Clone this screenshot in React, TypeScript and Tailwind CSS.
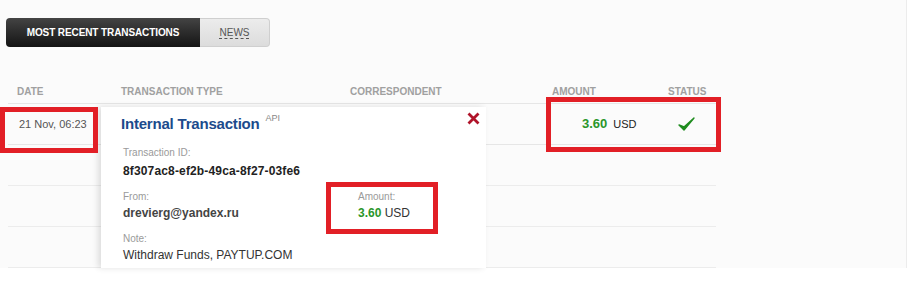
import React from 'react';

const rows = [1, 2, 3];

export default function App() {
    return (
        <div className="relative w-[916px] h-[281px] overflow-hidden bg-white font-['Liberation_Sans',Arial,sans-serif]">
            <div className="w-[907px] h-[268px] bg-[#fbfbfb] border-r border-[#ececec] pt-[18px]">
                {/* Tabs */}
                <div className="flex ml-[6px] h-[29px]">
                    <div className="w-[194px] flex items-center justify-center rounded-l-[4px] bg-gradient-to-b from-[#444] to-[#151515] text-white text-[10px] font-bold tracking-[-0.1px]">
                        MOST RECENT TRANSACTIONS
                    </div>
                    <div className="w-[70px] flex items-center justify-center rounded-r-[4px] bg-gradient-to-b from-[#ececec] to-[#dcdcdc] border border-l-0 border-[#cfcfcf] text-[#555] text-[10px]">
                        <span className="underline decoration-dashed underline-offset-2">NEWS</span>
                    </div>
                </div>

                {/* Table */}
                <div className="ml-[8px] w-[708px] mt-[33px]">
                    <div className="grid grid-cols-[105px_229px_202px_116px_56px] h-[24px] pt-[6px] leading-[12px] text-[10px] text-[#a0a0a0] font-bold border-b border-[#e6e6e6]">
                        <div className="pl-[9px]">DATE</div>
                        <div className="pl-[8px]">TRANSACTION TYPE</div>
                        <div className="pl-[8px]">CORRESPONDENT</div>
                        <div className="pl-[8px]">AMOUNT</div>
                        <div className="pl-[8px]">STATUS</div>
                    </div>
                    <div className="grid grid-cols-[105px_229px_202px_116px_56px] h-[41px] items-center border-b border-[#e6e6e6]">
                        <div className="pl-[11px] text-[11px] text-[#555]">21 Nov, 06:23</div>
                        <div />
                        <div />
                        <div className="pl-[38px] text-[11px] text-[#222]">
                            <span className="text-[13px] font-bold text-[#2a962a] mr-[6px]">3.60</span>USD
                        </div>
                        <div className="pl-[18px]">
                            <svg width="17" height="15" viewBox="0 0 17 15">
                                <path d="M1 8 L6 13 L16 1 L6 10 Z" fill="#1f8c1f" stroke="#1f8c1f" strokeWidth="1.4" strokeLinejoin="round" />
                            </svg>
                        </div>
                    </div>
                    {rows.map((r) => (
                        <div key={r} className="h-[41px] border-b border-[#ececec]" />
                    ))}
                </div>
            </div>

            {/* Transaction popup */}
            <div className="absolute left-[101px] top-[107px] w-[385px] h-[161px] bg-white shadow-[-3px_0_6px_rgba(0,0,0,0.12)] pl-[20px] pt-[9px]">
                <div className="flex items-start h-[16px]">
                    <span className="text-[15px] leading-[16px] font-bold text-[#1c4b8c] tracking-[-0.2px]">Internal Transaction</span>
                    <span className="ml-[6px] text-[9px] leading-[9px] -mt-[2px] text-[#888]">API</span>
                </div>
                <svg className="absolute right-[6px] top-[5px]" width="13" height="13" viewBox="0 0 13 13">
                    <path d="M1.5 1.5 L11.5 11.5 M11.5 1.5 L1.5 11.5" stroke="#b0142a" strokeWidth="2.8" />
                </svg>
                <div className="pl-[2px] mt-[14px]">
                    <div className="text-[10px] leading-[13px] text-[#9a9a9a]">Transaction ID:</div>
                    <div className="text-[12px] leading-[14px] font-bold text-[#222] mt-[5px] tracking-[0.15px]">8f307ac8-ef2b-49ca-8f27-03fe6</div>
                    <div className="grid grid-cols-[235px_1fr] mt-[12px]">
                        <div>
                            <div className="text-[10px] leading-[13px] text-[#9a9a9a]">From:</div>
                            <div className="text-[12px] leading-[14px] font-bold text-[#444] mt-[3px]">drevierg@yandex.ru</div>
                        </div>
                        <div>
                            <div className="text-[10px] leading-[13px] text-[#9a9a9a]">Amount:</div>
                            <div className="text-[12px] leading-[14px] text-[#333] mt-[3px]">
                                <span className="font-bold text-[#2a962a]">3.60</span> USD
                            </div>
                        </div>
                    </div>
                    <div className="text-[10px] leading-[13px] text-[#9a9a9a] mt-[12px]">Note:</div>
                    <div className="text-[12px] leading-[14px] text-[#333] mt-[3px]">Withdraw Funds, PAYTUP.COM</div>
                </div>
            </div>

            {/* Highlight boxes */}
            <div className="absolute left-0 top-[107px] w-[98px] h-[46px] border-[5px] border-[#e21f26]" />
            <div className="absolute left-[546px] top-[97px] w-[175px] h-[55px] border-[5px] border-[#e21f26]" />
            <div className="absolute left-[326px] top-[182px] w-[112px] h-[52px] border-[5px] border-[#e21f26]" />
        </div>
    );
}
